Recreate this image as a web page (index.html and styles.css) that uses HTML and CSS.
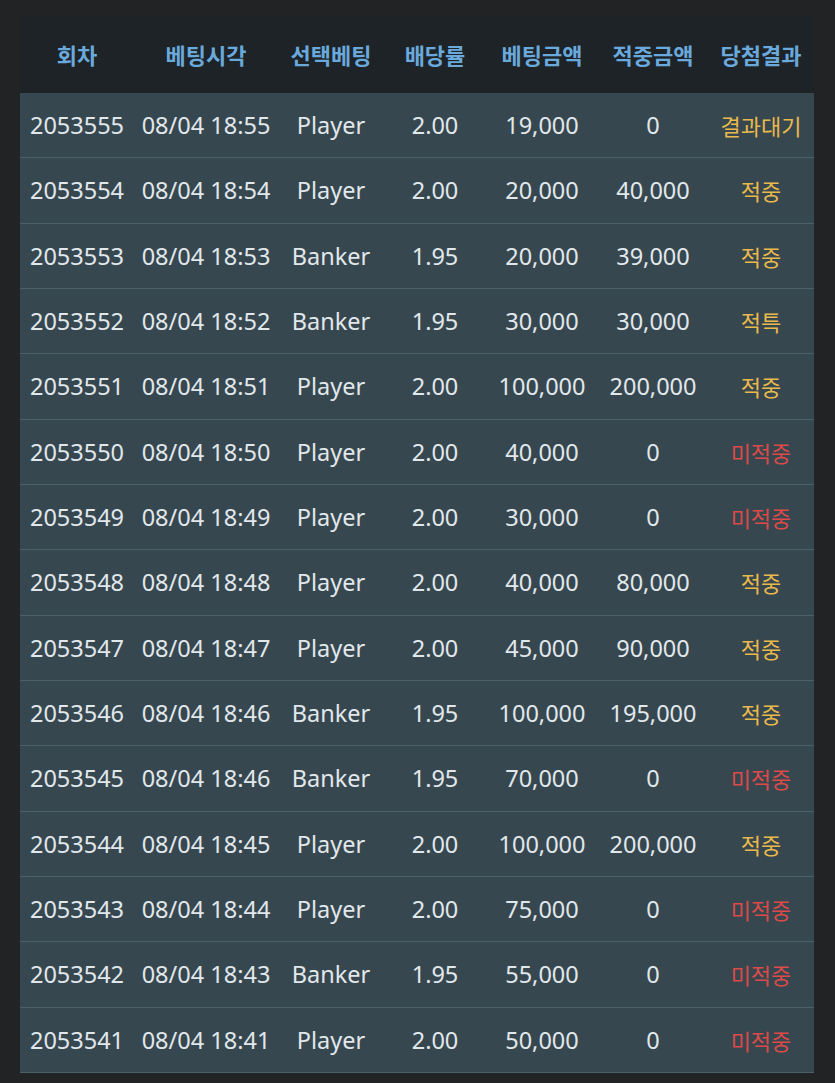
FILE: index.html
```html
<!DOCTYPE html>
<html lang="ko">
<head>
<meta charset="utf-8">
<link rel="stylesheet" href="styles.css">
</head>
<body>
<div class="wrap">
<table class="bets">
<colgroup>
<col class="c1"><col class="c2"><col class="c3"><col class="c4"><col class="c5"><col class="c6"><col class="c7">
</colgroup>
<thead>
<tr><th>회차</th><th>베팅시각</th><th>선택베팅</th><th>배당률</th><th>베팅금액</th><th>적중금액</th><th>당첨결과</th></tr>
</thead>
<tbody>
<tr><td>2053555</td><td>08/04 18:55</td><td>Player</td><td>2.00</td><td>19,000</td><td>0</td><td class="wait">결과대기</td></tr>
<tr><td>2053554</td><td>08/04 18:54</td><td>Player</td><td>2.00</td><td>20,000</td><td>40,000</td><td class="win">적중</td></tr>
<tr><td>2053553</td><td>08/04 18:53</td><td>Banker</td><td>1.95</td><td>20,000</td><td>39,000</td><td class="win">적중</td></tr>
<tr><td>2053552</td><td>08/04 18:52</td><td>Banker</td><td>1.95</td><td>30,000</td><td>30,000</td><td class="win">적특</td></tr>
<tr><td>2053551</td><td>08/04 18:51</td><td>Player</td><td>2.00</td><td>100,000</td><td>200,000</td><td class="win">적중</td></tr>
<tr><td>2053550</td><td>08/04 18:50</td><td>Player</td><td>2.00</td><td>40,000</td><td>0</td><td class="lose">미적중</td></tr>
<tr><td>2053549</td><td>08/04 18:49</td><td>Player</td><td>2.00</td><td>30,000</td><td>0</td><td class="lose">미적중</td></tr>
<tr><td>2053548</td><td>08/04 18:48</td><td>Player</td><td>2.00</td><td>40,000</td><td>80,000</td><td class="win">적중</td></tr>
<tr><td>2053547</td><td>08/04 18:47</td><td>Player</td><td>2.00</td><td>45,000</td><td>90,000</td><td class="win">적중</td></tr>
<tr><td>2053546</td><td>08/04 18:46</td><td>Banker</td><td>1.95</td><td>100,000</td><td>195,000</td><td class="win">적중</td></tr>
<tr><td>2053545</td><td>08/04 18:46</td><td>Banker</td><td>1.95</td><td>70,000</td><td>0</td><td class="lose">미적중</td></tr>
<tr><td>2053544</td><td>08/04 18:45</td><td>Player</td><td>2.00</td><td>100,000</td><td>200,000</td><td class="win">적중</td></tr>
<tr><td>2053543</td><td>08/04 18:44</td><td>Player</td><td>2.00</td><td>75,000</td><td>0</td><td class="lose">미적중</td></tr>
<tr><td>2053542</td><td>08/04 18:43</td><td>Banker</td><td>1.95</td><td>55,000</td><td>0</td><td class="lose">미적중</td></tr>
<tr><td>2053541</td><td>08/04 18:41</td><td>Player</td><td>2.00</td><td>50,000</td><td>0</td><td class="lose">미적중</td></tr>
</tbody>
</table>
</div>
</body>
</html>
```
FILE: styles.css
```css
html, body {
  margin: 0;
  padding: 0;
  background: #222324;
}
body {
  font-family: "Noto Sans", "Noto Sans CJK KR", sans-serif;
}
.wrap {
  padding: 15px 21px 10px 20px;
}
.bets {
  width: 794px;
  border-collapse: collapse;
  table-layout: fixed;
}
.c1 { width: 114px; }
.c2 { width: 144px; }
.c3 { width: 106px; }
.c4 { width: 102px; }
.c5 { width: 112px; }
.c6 { width: 110px; }
.c7 { width: 106px; }
.bets th {
  background: #1d2327;
  color: #6aa9dc;
  font-family: "Noto Sans CJK KR", sans-serif;
  font-weight: 700;
  font-size: 22px;
  height: 78px;
  padding: 0;
  text-align: center;
  white-space: nowrap;
}
.bets td {
  background: #37474f;
  color: #e1e8ec;
  font-size: 23.5px;
  height: 64.33px;
  padding: 0;
  text-align: center;
  border-bottom: 1px solid #4b5f6b;
  white-space: nowrap;
}
.bets td.wait, .bets td.win, .bets td.lose {
  font-family: "Noto Sans CJK KR", sans-serif;
  font-size: 22px;
}
.bets td.wait, .bets td.win { color: #e9b94c; }
.bets td.lose { color: #dc4a4a; }
```
